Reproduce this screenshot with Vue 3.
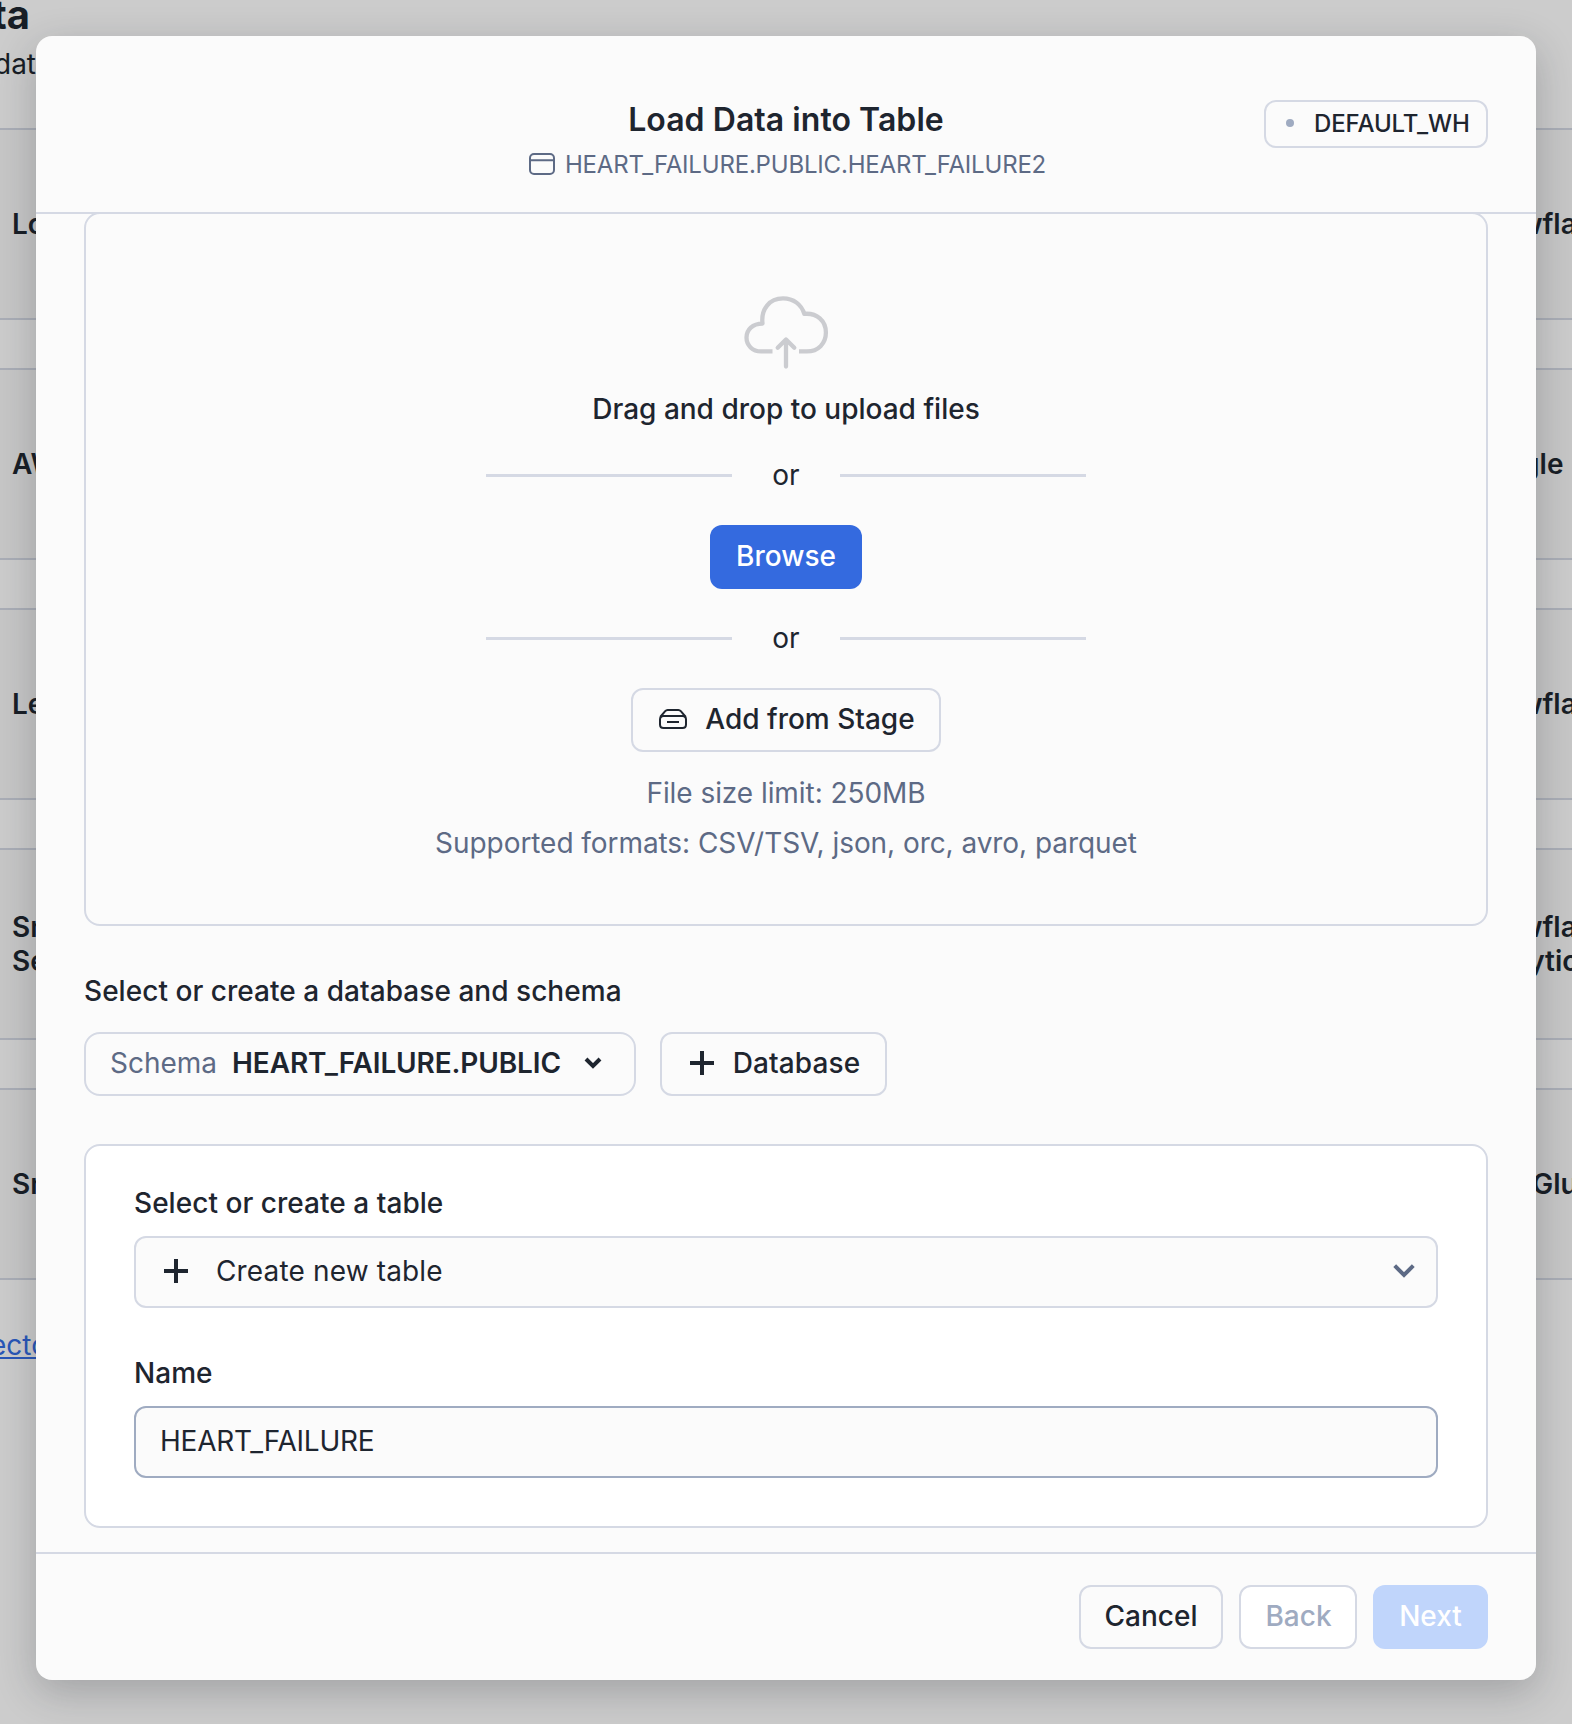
<script setup>
const sources = [
  { left: ['Load'], right: ['Snowflake'] },
  { left: ['AWS'], right: ['Google'] },
  { left: ['Learn'], right: ['Snowflake'] },
  { left: ['Snow', 'Serv'], right: ['Snowflake', 'Analytics'] },
  { left: ['Snow'], right: ['AWS Glue'], tight: true },
]
</script>

<template>
  <div class="screen">
    <div class="page">
      <div class="page-title"><span>Data</span></div>
      <div class="page-sub"><span>data</span></div>
      <div class="sources">
        <div v-for="(row, i) in sources" :key="i" class="source">
          <div class="source-left"><div v-for="t in row.left" :key="t">{{ t }}</div></div>
          <div class="source-right" :class="{ tight: row.tight }"><div v-for="t in row.right" :key="t">{{ t }}</div></div>
        </div>
      </div>
      <div class="page-link"><a>connecto</a></div>
    </div>

    <div class="backdrop">
      <div class="modal">
        <header class="head">
          <div class="head-side"></div>
          <div class="head-main">
            <h1>Load Data into Table</h1>
            <div class="path">
              <svg width="26" height="22" viewBox="0 0 26 22" fill="none" stroke="#5d6a85" stroke-width="2">
                <rect x="1" y="1" width="24" height="20" rx="4" />
                <path d="M1 7.2H25" />
              </svg>
              <span>HEART_FAILURE.PUBLIC.HEART_FAILURE2</span>
            </div>
          </div>
          <div class="head-side">
            <button class="warehouse"><i class="dot"></i><span>DEFAULT_WH</span></button>
          </div>
        </header>

        <main class="body">
          <section class="drop">
            <svg class="cloud" width="88" height="76" viewBox="742 294 88 76" fill="none" stroke="#cbccd0" stroke-width="4.3" stroke-linecap="butt" stroke-linejoin="round">
              <path d="M772.500 351.400H761C752.500 351.400 746.500 345.400 746.500 337.600C746.500 329.600 752.600 323.600 762.500 323.600C760.800 309 769.500 298.400 783 298.400C793.500 298.400 801.500 304.500 804.300 313.900C817 312.700 825.900 321 825.900 332.600C825.900 343.700 818 351.400 807 351.400H799" />
              <path d="M786 366.500V340M777.700 347.800L786 339.500L794.300 347.800" stroke-linecap="round" />
            </svg>
            <div class="drop-title">Drag and drop to upload files</div>
            <div class="or"><i></i><span>or</span><i></i></div>
            <button class="btn primary browse">Browse</button>
            <div class="or"><i></i><span>or</span><i></i></div>
            <button class="btn stage">
              <svg width="28" height="20" viewBox="0 0 28 20" fill="none" stroke="#1e252f" stroke-width="2" stroke-linejoin="round">
                <path d="M1.200 8L6.200 2.200C7 1.300 7.600 1 8.600 1H19.400C20.400 1 21 1.300 21.800 2.200L26.800 8" />
                <path d="M4.500 7H23.500C25.700 7 27 8.300 27 10.500V15.500C27 17.700 25.700 19 23.500 19H4.500C2.300 19 1 17.700 1 15.500V10.500C1 8.300 2.300 7 4.500 7Z" />
                <path d="M8 13H20" />
              </svg>
              <span>Add from Stage</span>
            </button>
            <div class="hint first">File size limit: 250MB</div>
            <div class="hint">Supported formats: CSV/TSV, json, orc, avro, parquet</div>
          </section>

          <h2 class="label">Select or create a database and schema</h2>
          <div class="pickers">
            <button class="btn schema">
              <span class="muted">Schema</span>
              <b>HEART_FAILURE.PUBLIC</b>
              <svg width="18" height="12" viewBox="0 0 18 12" fill="none" stroke="#1e252f" stroke-width="4"><path d="M2 2L9 9L16 2" /></svg>
            </button>
            <button class="btn database">
              <svg width="24" height="24" viewBox="0 0 24 24" stroke="#1e252f" stroke-width="4"><path d="M12 0V24M0 12H24" /></svg>
              <span>Database</span>
            </button>
          </div>

          <section class="card">
            <label class="label">Select or create a table</label>
            <div class="field select">
              <svg width="24" height="24" viewBox="0 0 24 24" stroke="#1e252f" stroke-width="4"><path d="M12 0V24M0 12H24" /></svg>
              <span>Create new table</span>
              <svg class="caret" width="22" height="14" viewBox="0 0 22 14" fill="none" stroke="#5d6a85" stroke-width="4"><path d="M1.700 1.700L11 11L20.300 1.700" /></svg>
            </div>
            <label class="label name">Name</label>
            <div class="field input">HEART_FAILURE</div>
          </section>
        </main>

        <footer class="foot">
          <button class="btn cancel">Cancel</button>
          <button class="btn back">Back</button>
          <button class="btn next">Next</button>
        </footer>
      </div>
    </div>
  </div>
</template>

<style>
html,
body {
  margin: 0;
  background: #cccccc;
}
</style>

<style scoped>
* {
  box-sizing: border-box;
}
.screen {
  position: relative;
  width: 1572px;
  height: 1724px;
  overflow: hidden;
  background: #cccccc;
  color: #1e252f;
  font: 400 28px/34px Inter, sans-serif;
}
button {
  font: inherit;
  color: inherit;
  background: none;
  padding: 0;
}
svg {
  flex: none;
  display: block;
}
.page {
  height: 100%;
  display: flex;
  flex-direction: column;
  color: #181e26;
}
.page-title {
  width: 30px;
  height: 44px;
  margin-top: -7px;
  display: flex;
  justify-content: flex-end;
  font-size: 40px;
  line-height: 44px;
  font-weight: 700;
}
.page-sub {
  height: 34px;
  margin: 10px 0 47px -6px;
}
.sources {
  display: flex;
  flex-direction: column;
  gap: 48px;
}
.source {
  height: 192px;
  display: flex;
  justify-content: space-between;
  align-items: center;
  background: #c7c7c7;
  border: solid #aaaeb7;
  border-width: 2px 0;
  font-weight: 600;
  padding-left: 12px;
}
.source-left,
.source-right {
  width: 105px;
  white-space: nowrap;
}
.source-right.tight {
  width: 112px;
}
.page-link {
  width: 48px;
  margin-top: 48px;
  display: flex;
  justify-content: flex-end;
}
.page-link a {
  color: #2a57b8;
  text-decoration: underline;
}
.backdrop {
  position: absolute;
  inset: 0;
  padding: 36px;
}
.modal {
  width: 1500px;
  height: 1644px;
  border-radius: 16px;
  overflow: hidden;
  background: #fbfbfb;
  box-shadow: 0 12px 40px rgba(25, 30, 36, 0.24);
  display: flex;
  flex-direction: column;
}
.head {
  height: 178px;
  flex: none;
  border-bottom: 2px solid #d5d9e4;
  display: flex;
  padding: 64px 48px 0;
}
.head-side {
  flex: 1;
  display: flex;
  justify-content: flex-end;
  align-items: flex-start;
}
.head-main {
  display: flex;
  flex-direction: column;
  align-items: center;
}
h1 {
  margin: 0;
  font-size: 32px;
  line-height: 40px;
  font-weight: 600;
  letter-spacing: 0.05px;
}
.path {
  display: flex;
  align-items: center;
  gap: 10px;
  margin-top: 9px;
  padding-left: 3px;
  height: 32px;
  font-size: 24px;
  letter-spacing: -0.19px;
  color: #5d6a85;
}
.path svg {
  margin-top: -3px;
}
.warehouse {
  width: 224px;
  height: 48px;
  border: 2px solid #d5d9e4;
  border-radius: 12px;
  display: flex;
  align-items: center;
  padding: 0 0 0 20px;
  font-size: 24px;
  font-weight: 500;
  letter-spacing: -0.1px;
}
.dot {
  width: 8px;
  height: 8px;
  border-radius: 50%;
  background: #9fabc1;
  margin: 0 20px 2px 0;
}
.body {
  height: 1338px;
  flex: none;
  overflow: hidden;
  padding: 0 48px;
}
.drop {
  height: 714px;
  margin-top: -2px;
  border: 2px solid #d5d9e4;
  border-radius: 16px;
  padding-top: 80px;
  display: flex;
  flex-direction: column;
  align-items: center;
}
.drop-title {
  margin-top: 22px;
  font-weight: 500;
}
.or {
  width: 600px;
  height: 33px;
  margin: 33px 0;
  display: flex;
  align-items: center;
  justify-content: space-between;
}
.or span {
  padding-bottom: 2px;
}
.or i {
  width: 246px;
  height: 3px;
  background: #d5d9e4;
}
.btn {
  height: 64px;
  border: 2px solid #d5d9e4;
  border-radius: 12px;
  padding-bottom: 2px;
  display: flex;
  align-items: center;
  justify-content: center;
  font-weight: 500;
  white-space: nowrap;
  flex: none;
}
.primary {
  border: 0;
  color: #fff;
  background: #346adf;
}
.browse {
  width: 152px;
}
.stage {
  width: 310px;
  gap: 18px;
  padding-left: 2px;
}
.hint {
  margin-top: 16px;
  color: #5d6a85;
  letter-spacing: -0.06px;
}
.hint.first {
  margin-top: 24px;
}
.label {
  display: block;
  margin: 0;
  font-size: 28px;
  line-height: 34px;
  font-weight: 500;
  letter-spacing: 0.04px;
}
h2.label {
  margin-top: 48px;
}
.pickers {
  display: flex;
  gap: 24px;
  margin-top: 24px;
}
.schema {
  width: 552px;
  border-radius: 16px;
  justify-content: flex-start;
  padding-left: 24px;
}
.schema b {
  font-weight: 600;
  letter-spacing: -0.13px;
  margin: 0 23px 0 15px;
}
.muted {
  font-weight: 400;
  color: #5d6a85;
}
.database {
  width: 227px;
  gap: 19px;
  padding-left: 3px;
  letter-spacing: 0.1px;
}
.card {
  height: 384px;
  margin-top: 48px;
  border: 2px solid #d5d9e4;
  border-radius: 16px;
  background: #fff;
  padding: 40px 48px 0;
}
.field {
  height: 72px;
  margin-top: 16px;
  border: 2px solid #d5d9e4;
  border-radius: 12px;
  background: #fbfbfb;
  display: flex;
  align-items: center;
}
.select {
  padding: 0 21px 2px 28px;
  gap: 28px;
  letter-spacing: 0.15px;
}
.caret {
  margin-left: auto;
}
.label.name {
  margin-top: 48px;
}
.input {
  border-color: #9fabc1;
  padding: 0 0 2px 24px;
  letter-spacing: -0.24px;
}
.foot {
  flex: 1;
  border-top: 2px solid #d5d9e4;
  display: flex;
  justify-content: flex-end;
  gap: 16px;
  padding: 31px 48px 0;
}
.cancel {
  width: 144px;
}
.back {
  width: 118px;
  padding-left: 1px;
  color: #9fabc1;
  background: #fff;
}
.next {
  width: 115px;
  border: 0;
  color: #fff;
  background: #c0d5fb;
}
</style>
